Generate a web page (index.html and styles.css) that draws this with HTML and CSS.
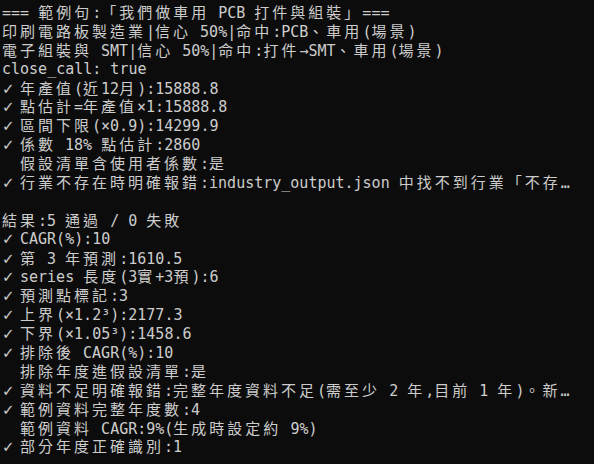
FILE: index.html
```html
<!DOCTYPE html>
<html lang="zh-Hant">
<head>
<meta charset="utf-8">
<title>Terminal</title>
<link rel="stylesheet" href="styles.css">
</head>
<body>
<main class="term">
<div class="ln">=== <span class="w">範例句</span>:<span class="w">「我們做車用</span> PCB <span class="w">打件與組裝」</span>===</div>
<div class="ln"><span class="w">印刷電路板製造業</span>|<span class="w">信心</span> 50%|<span class="w">命中</span>:PCB<span class="w">、車用</span>(<span class="w">場景</span>)</div>
<div class="ln"><span class="w">電子組裝與</span> SMT|<span class="w">信心</span> 50%|<span class="w">命中</span>:<span class="w">打件</span>→SMT<span class="w">、車用</span>(<span class="w">場景</span>)</div>
<div class="ln">close_call: true</div>
<div class="ln"><span class="ck">✓</span><span class="w">年產值</span>(<span class="w">近</span>12<span class="w">月</span>):15888.8</div>
<div class="ln"><span class="ck">✓</span><span class="w">點估計</span>=<span class="w">年產值</span>×1:15888.8</div>
<div class="ln"><span class="ck">✓</span><span class="w">區間下限</span>(×0.9):14299.9</div>
<div class="ln"><span class="ck">✓</span><span class="w">係數</span> 18% <span class="w">點估計</span>:2860</div>
<div class="ln">  <span class="w">假設清單含使用者係數</span>:<span class="w">是</span></div>
<div class="ln"><span class="ck">✓</span><span class="w">行業不存在時明確報錯</span>:industry_output.json <span class="w">中找不到行業「不存</span>…</div>
<div class="ln"> </div>
<div class="ln"><span class="w">結果</span>:5 <span class="w">通過</span> / 0 <span class="w">失敗</span></div>
<div class="ln"><span class="ck">✓</span>CAGR(%):10</div>
<div class="ln"><span class="ck">✓</span><span class="w">第</span> 3 <span class="w">年預測</span>:1610.5</div>
<div class="ln"><span class="ck">✓</span>series <span class="w">長度</span>(3<span class="w">實</span>+3<span class="w">預</span>):6</div>
<div class="ln"><span class="ck">✓</span><span class="w">預測點標記</span>:3</div>
<div class="ln"><span class="ck">✓</span><span class="w">上界</span>(×1.2³):2177.3</div>
<div class="ln"><span class="ck">✓</span><span class="w">下界</span>(×1.05³):1458.6</div>
<div class="ln"><span class="ck">✓</span><span class="w">排除後</span> CAGR(%):10</div>
<div class="ln">  <span class="w">排除年度進假設清單</span>:<span class="w">是</span></div>
<div class="ln"><span class="ck">✓</span><span class="w">資料不足明確報錯</span>:<span class="w">完整年度資料不足</span>(<span class="w">需至少</span> 2 <span class="w">年</span>,<span class="w">目前</span> 1 <span class="w">年</span>)<span class="w">。新</span>…</div>
<div class="ln"><span class="ck">✓</span><span class="w">範例資料完整年度數</span>:4</div>
<div class="ln">  <span class="w">範例資料</span> CAGR:9%(<span class="w">生成時設定約</span> 9%)</div>
<div class="ln"><span class="ck">✓</span><span class="w">部分年度正確識別</span>:1</div>
</main>
</body>
</html>
```

FILE: styles.css
```css
html, body {
  margin: 0;
  padding: 0;
  background: #0c0c0c;
}

body {
  width: 594px;
  height: 464px;
  overflow: hidden;
}

.term {
  padding: 3px 0 0 2px;
  color: #cccccc;
  font-family: "DejaVu Sans Mono", "Noto Sans CJK TC", monospace;
  font-size: 15px;
  line-height: 18.9px;
}

.ln {
  white-space: pre;
  height: 18.9px;
}

.w {
  font-family: "Noto Sans CJK TC", sans-serif;
  font-size: 15px;
  letter-spacing: 3px;
}

.ck {
  display: inline-block;
  width: 18px;
  font-family: "DejaVu Sans", sans-serif;
  font-size: 15px;
}
```
